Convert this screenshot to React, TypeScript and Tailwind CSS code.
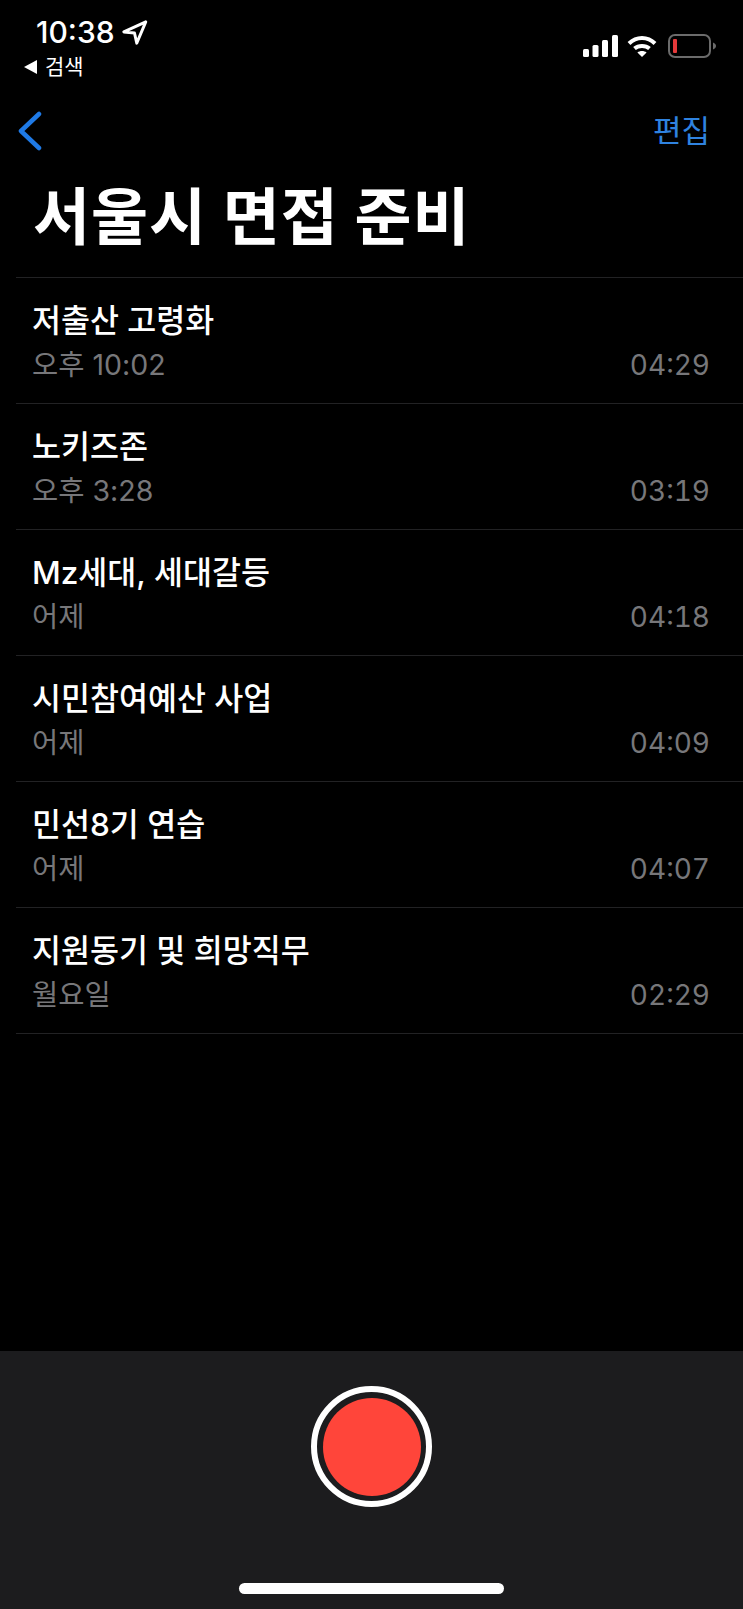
const SANS = "font-['Inter','Noto_Sans_CJK_KR',sans-serif]";

const rows = [
  { title: "저출산 고령화", sub: "오후 10:02", dur: "04:29" },
  { title: "노키즈존", sub: "오후 3:28", dur: "03:19" },
  { title: "Mz세대, 세대갈등", sub: "어제", dur: "04:18" },
  { title: "시민참여예산 사업", sub: "어제", dur: "04:09" },
  { title: "민선8기 연습", sub: "어제", dur: "04:07" },
  { title: "지원동기 및 희망직무", sub: "월요일", dur: "02:29" },
];

function Signal() {
  return (
    <svg width="35" height="22" viewBox="0 0 35 22" fill="#fff">
      <rect x="0" y="14" width="6" height="8" rx="1.5" />
      <rect x="9.500" y="10" width="6" height="12" rx="1.5" />
      <rect x="19" y="5" width="6" height="17" rx="1.5" />
      <rect x="29" y="0" width="6" height="22" rx="1.5" />
    </svg>
  );
}

function Wifi() {
  return (
    <svg width="30" height="22" viewBox="0 0 30 22" fill="none" stroke="#fff" strokeWidth="4">
      <path d="M2 8.5C9.5 1 20.5 1 28 8.5" />
      <path d="M7.5 13.5C11.5 10 18.5 10 22.5 13.5" />
      <path d="M15 22l-4.6-4.6c2.6-2 6.6-2 9.2 0z" fill="#fff" stroke="none" />
    </svg>
  );
}

function Battery() {
  return (
    <svg width="48" height="24" viewBox="0 0 48 24" fill="none">
      <rect x="1" y="1" width="41" height="22" rx="6" stroke="#6b6b6b" strokeWidth="2" />
      <rect x="5" y="5" width="4" height="14" rx="1" fill="#e5393a" />
      <path d="M45 8.5c2 .8 3 2 3 3.5s-1 2.700-3 3.500z" fill="#6b6b6b" />
    </svg>
  );
}

export default function App() {
  return (
    <div className={`${SANS} flex h-[1609px] w-[743px] flex-col overflow-hidden bg-black text-white`}>
      <div className="flex h-[82px] items-start justify-between pl-[24px] pr-[27px]">
        <div className="flex flex-col">
          <div className="mt-[16px] flex h-[32px] items-center gap-[6px] pl-[12px]">
            <span className="text-[30px] leading-[32px] font-medium">10:38</span>
            <svg width="27" height="27" viewBox="0 0 24 24" fill="none" stroke="#fff" strokeWidth="2.600" strokeLinejoin="round">
              <path d="M22 2.500L2.500 11.500l9.500 1 2 9z" />
            </svg>
          </div>
          <div className="mt-[7px] flex items-center gap-[8px]">
            <span className="h-0 w-0 border-y-[7px] border-r-[13px] border-y-transparent border-r-white" />
            <span className="text-[21px] leading-[24px]">검색</span>
          </div>
        </div>
        <div className="mt-[34px] flex items-center gap-[9px]">
          <Signal />
          <Wifi />
          <span className="ml-[2px]"><Battery /></span>
        </div>
      </div>

      <div className="mt-[24px] flex h-[50px] items-center justify-between pl-[18px] pr-[33px]">
        <svg width="24" height="40" viewBox="0 0 24 40" fill="none" stroke="#1f7ae6" strokeWidth="4.500" strokeLinecap="round" strokeLinejoin="round">
          <path d="M21 3L3 20l18 17" />
        </svg>
        <span className="text-[31px] leading-[40px] text-[#2f83e0]">편집</span>
      </div>

      <h1 className="mt-[20px] pl-[33px] text-[62px] leading-[84px] font-bold tracking-[1px]">서울시 면접 준비</h1>

      <ul className="mt-[17px] ml-[16px] border-t border-[#222224]">
        {rows.map((r) => (
          <li key={r.title} className="flex h-[126px] flex-col border-b border-[#222224] pl-[16px] pr-[33px] pt-[22px]">
            <div className="text-[31.500px] leading-[42px] font-medium">{r.title}</div>
            <div className="mt-[2px] flex items-center justify-between text-[28.500px] leading-[42px] text-[#77777a]">
              <span>{r.sub}</span>
              <span className="text-[28px] tabular-nums">{r.dur}</span>
            </div>
          </li>
        ))}
      </ul>

      <div className="mt-auto flex h-[258px] flex-col items-center bg-[#1c1c1e]">
        <div className="mt-[35px] flex h-[121px] w-[121px] items-center justify-center rounded-full border-[6px] border-white">
          <div className="h-[98px] w-[98px] rounded-full bg-[#ff453a]" />
        </div>
        <div className="mt-[76px] h-[11px] w-[265px] rounded-full bg-white" />
      </div>
    </div>
  );
}
